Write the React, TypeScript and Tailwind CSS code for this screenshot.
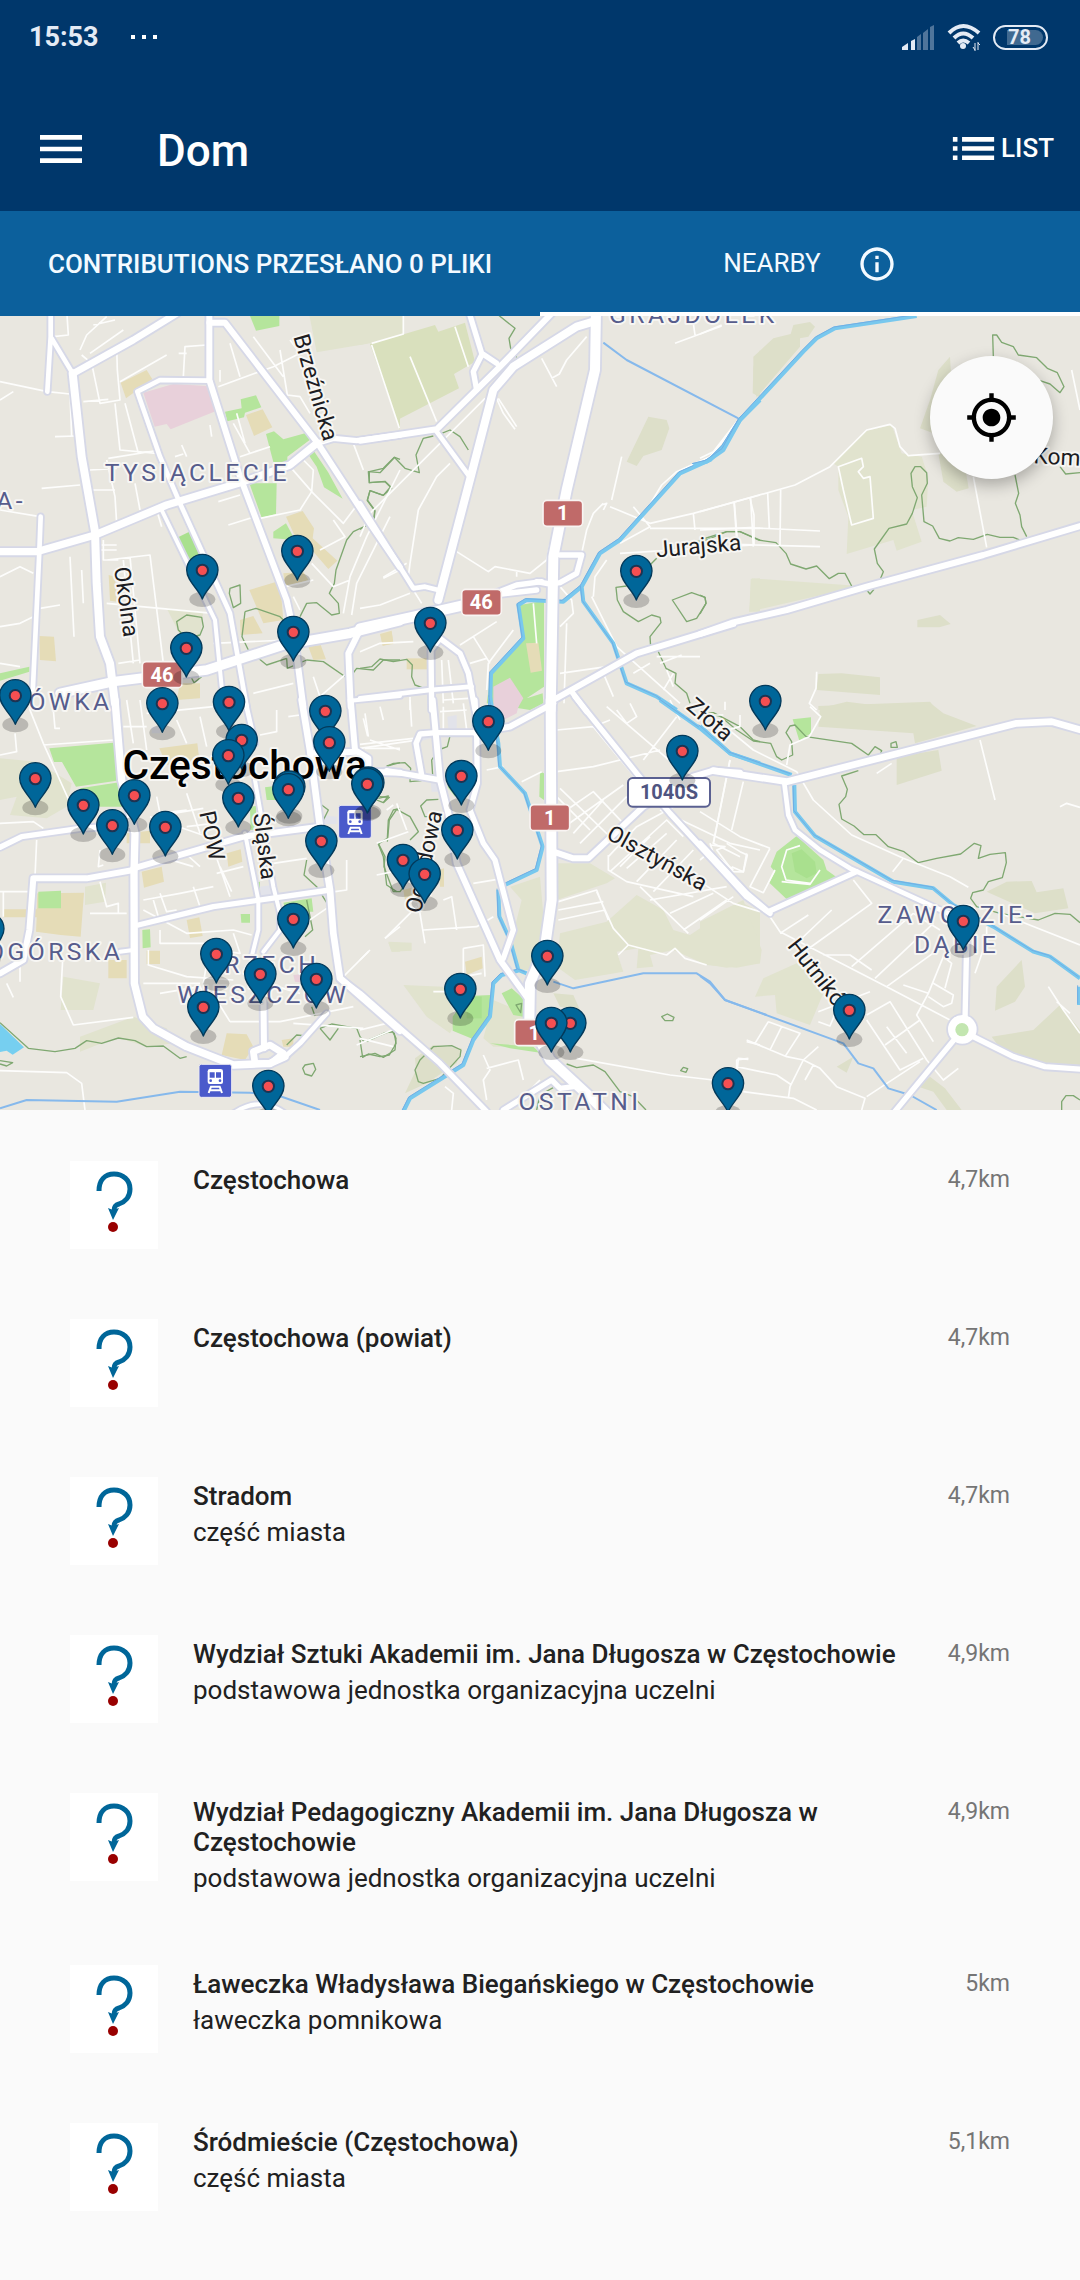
import { MdInfoOutline, MdList, MdMenu, MdMyLocation } from "react-icons/md";

type Tile = {
  x: number;
  y: number;
  areas?: [string, string][];
  minor?: string;
  trails?: string;
  river?: string;
  stream?: string;
  roads: [number, string][];
};

const PARK = "#b5e59c";
const PARK_DARK = "#a9e08e";
const SCHOOL = "#e5dcb7";
const GRASS = "#e1e3ce";
const MEADOW = "#d9e0bd";
const SCRUB = "#dddfc9";
const HOSPITAL = "#e8d0da";
const POND = "#76cff0";
const GREY = "#e2e3ea";

const tiles: Tile[] = [
  {
    x: 0,
    y: 930,
    areas: [
      [PARK, "M750,18H838V48L768,62Z"],
      [GRASS, "M925,0H1200V85L950,127Z"],
      [MEADOW, "M1110,102L1200,80V360Z"],
      [SCHOOL, "M362,218L440,180L457,208L378,265Z"],
      [HOSPITAL, "M430,248L520,222L620,228L650,302L512,358L500,342L464,350Z"],
      [PARK, "M675,305L725,295L722,268L768,256L784,292L735,308L732,322L682,334Z"],
      [SCHOOL, "M738,315L788,298L817,352L762,378Z"],
      [PARK, "M798,372L822,364L850,388L915,370L932,388L862,440L862,458L820,456Z"],
      [PARK, "M924,432L942,424L984,486L1028,566L972,532L950,470Z"],
      [PARK, "M748,520H830L828,612L785,623Z"],
      [PARK, "M820,665L858,640L885,690L820,685Z"],
      [SCHOOL, "M858,620L908,603L942,655L938,685L1012,752L985,777L940,725L890,690Z"],
      [PARK_DARK, "M534,682L568,665L600,735L572,755Z"],
      [SCHOOL, "M748,840L840,812L850,930L790,940Z"],
      [SCHOOL, "M850,790L910,785L925,810L855,830Z"],
      [SCHOOL, "M720,930L760,918L788,970L722,975Z"],
      [SCHOOL, "M326,795L345,800L350,875L330,872Z"],
      [SCHOOL, "M118,978L162,980L168,1054L120,1050Z"],
      [GRASS, "M500,895L610,905L600,985L540,975Z"],
      [PARK, "M0,1090L88,1070L88,1085L0,1112Z"],
      [SCHOOL, "M925,1010L962,1005L978,1048L940,1050Z"],
      [SCHOOL, "M1142,975L1175,965L1180,1000L1148,1008Z"],
      [SCHOOL, "M540,1120L600,1120V1165L530,1170Z"],
    ],
    minor:
      "M200,0L205,75L160,80M320,20L260,75L240,120M345,30L280,45M370,60L270,130M350,110L352,180L360,270L300,280L275,160L245,135M0,215L142,245L210,252M0,270L40,245M165,380L230,378M210,250L215,380M125,535L240,525M0,600L120,620M500,135L360,215M550,200L555,110L620,105M536,130L560,130M345,280L360,420L470,430M375,280L415,430M325,445L480,420M320,450L345,560L350,640M405,520L420,600M250,275L325,268M270,480L350,475M250,540H345M310,690V750H355M305,705H350M300,720H350M320,750L450,735L490,1060M390,740L420,1060M210,740L222,980M245,780L250,880M120,895L180,885M370,750L400,1060M320,880L640,910M640,1000L860,990M545,405L560,440M525,440L550,432M630,345L635,380M660,180V215M655,230L820,170L900,130L870,90M690,100L720,200M840,120L862,255L900,260L930,310M760,80L850,200M700,340L750,430M710,310L735,400M720,440L810,410M870,470L940,550L1030,640L1075,580M900,440L940,480L935,545L900,600L780,625M655,575L720,555M685,645L780,615M470,600L485,650M1000,630L1035,680L960,720M1200,480L1100,680L1050,800L1030,910M1170,620L1070,820L1055,915M1200,780L1150,805M855,830L940,810M880,860L900,900M0,800L60,770L100,790M0,950L60,940L100,920M0,1060L60,1070M355,1060L420,1050M940,1100L960,1160L1040,1090M760,1150L880,1120M1060,400L1090,480M935,760L1000,830L1050,810",
    trails:
      "M1200,448L1184,442L1140,488L1105,485L1108,518L1155,514L1172,530L1150,556L1110,542L1102,570L1124,600L1122,625L1103,645L1060,665L1040,690L1008,780L1003,820L988,850L1015,880L1018,910L995,915L950,878L920,880L900,920M735,905L768,895L840,920L860,940M735,905L726,980L745,1020L800,1065L860,1045M530,935L560,915L605,922L610,950L600,975L560,985L535,960ZM690,835L720,825L722,880L700,893L688,850ZM860,1045L862,1075L920,1050L970,1055L1050,1110M1055,1095L1070,1075L1120,1080L1150,1050L1200,1050M570,1095L582,1118L605,1100",
    roads: [
      [14, "M152,0V80L142,245M155,85L218,190"],
      [20, "M530,10L400,90L220,190"],
      [24, "M218,190L245,440L285,665L290,820L300,980L330,1060L345,1180"],
      [22, "M0,725H110L285,675L500,585L730,515L870,465L950,400"],
      [16, "M950,400L1000,385L1070,392L1200,375"],
      [14, "M122,620L118,725L98,1150"],
      [18, "M628,0V210L720,500L860,870L880,960L910,1190"],
      [18, "M628,38H675L950,395L1110,640L1200,772"],
      [14, "M630,212L480,210L412,245L480,440L540,580L690,910L740,1190"],
      [12, "M485,600L645,930L665,1130"],
      [28, "M180,1150L340,1115L620,1080L850,1005L1050,970L1200,932"],
      [18, "M1075,970L1045,1030L1052,1190"],
      [12, "M1050,1172L1200,1158"],
    ],
  },
  {
    x: 1080,
    y: 930,
    areas: [
      [MEADOW, "M32,102L225,45L235,65L315,38L345,155L282,192L297,235L118,327Z"],
      [GRASS, "M0,0H130V75L0,105Z"],
      [SCRUB, "M865,320L920,330L928,355L905,420L850,438L830,468L800,455Z"],
      [SCRUB, "M1200,120L1180,170L1178,250L1200,262Z"],
      [PARK, "M480,885L552,872V1130L500,1165L548,1150L550,1180L510,1200L380,1180L393,1090L490,985Z"],
      [HOSPITAL, "M400,1130L450,1103L490,1165L470,1200H400Z"],
      [SCHOOL, "M498,1000L535,998L546,1082L512,1088Z"],
      [SCHOOL, "M60,972L95,962L100,1002L68,1006Z"],
      [SCHOOL, "M140,1045H205V1078H140Z"],
      [GRASS, "M1172,808L1200,805V905L1168,905Z"],
    ],
    minor:
      "M35,105L118,355M150,140L230,335M285,50L325,170M130,0V72L35,100M545,145L590,230M680,80L620,150L598,192L575,205M405,255L430,310L465,358M415,265L470,350M375,265L30,610L0,680M270,460L230,500L175,600L150,760L145,800M290,725L385,785L405,770L510,790L560,750L570,700M470,800V780M70,802L140,760M160,840L185,880M0,895L60,885L150,850M785,440L755,570M730,580L700,610L680,660L665,730M750,590L870,640L1000,610L1200,555M730,600L740,580L725,585M1000,610L1005,660M1122,575L1130,690M1172,565L1180,710M870,655L1200,655M780,700L870,650L820,590M860,600L905,525L950,485L1050,440L1100,380L1140,330M780,730L1180,705M945,100L1085,48M1000,40L1005,75M700,860L705,800L740,750M695,860L770,1010L960,1180M600,830L635,870L640,910L600,950M620,940L612,1180M600,1090L740,1070M730,1090L760,1160M820,1090L870,1060M890,1040H1020M900,1060L965,1035M940,1090L910,1140M920,1080L940,1130M340,980L390,1060M300,1005L410,935M0,1025L60,1000L160,995M245,1050L250,1180M265,1050L280,1180M330,1060L380,1045M150,1160V1200M520,880L530,1000M460,960L385,1060L380,1140M250,1170L325,1165",
    trails:
      "M415,15L465,55L447,85L452,115L470,142M245,370L270,360L300,380L325,420M220,378L190,385L168,435L178,488L135,475L103,442L70,475L28,485V518L75,515L95,535L70,556L30,542L22,572L45,603L42,625L20,645L0,658M890,745L870,765M800,828L768,832L772,870L790,905L835,935L875,915L900,922L903,938L870,980L872,1010L895,1025L918,1075L948,1090L945,1120L980,1150L990,1180M937,870L995,848L1035,862L1038,880L1010,925L980,935ZM980,700L1040,690L1100,665H1140L1200,690M0,1075L35,1070L60,1047L100,1055L140,1048L157,1065L155,1100L165,1125L185,1132",
    river:
      "M1200,270L1140,330L1090,410L1050,450L960,490L780,690L720,730L665,830L670,875L760,1000L800,1120L890,1160L950,1200M665,830L610,875L500,870L475,885L490,985L393,1090L390,1200",
    stream: "M730,98L800,150L1135,325",
    roads: [
      [16, "M325,0L365,130L410,160M365,135L340,185L350,240"],
      [18, "M575,10L420,170L230,358L0,392"],
      [24, "M700,35L650,50L460,170L400,240L335,490L235,870"],
      [14, "M230,365L325,495M0,580L160,835L195,830L235,840"],
      [30, "M708,0L705,180L620,540L580,740L572,1200"],
      [16, "M600,735H665L650,790L600,818L570,822L530,815"],
      [30, "M0,955L160,920L380,870"],
      [16, "M380,860L470,825L545,815M400,855L530,840"],
      [16, "M215,1200L213,1020L240,985L300,1030L325,1090L345,1200"],
      [14, "M0,1165L210,1140L335,1130"],
      [18, "M580,1170L830,1030L1120,942"],
      [16, "M635,1145L680,1205"],
    ],
  },
  {
    x: 2100,
    y: 930,
    areas: [
      [SCRUB, "M160,140L220,85L272,72L280,45L330,36L345,50L325,80L300,85V110L170,262L160,230Z"],
      [GRASS, "M400,460L500,362L575,345L605,430L665,440L685,500L680,590L635,600L665,695L590,722L580,690L440,732L445,620L415,540V470Z"],
      [SCRUB, "M750,140L715,180L690,270L660,355L700,370L760,300ZM715,430L790,440L806,535L770,545L730,515Z"],
      [GRASS, "M155,805L480,828L148,905Z"],
      [SCRUB, "M652,930L720,915L752,942L718,952H652ZM355,1092L425,1090L540,1102V1155L350,1140ZM355,1188L690,1175L710,1200H355Z"],
    ],
    minor:
      "M0,72L65,45M0,605L285,525L390,470L500,360L570,343L585,355L600,410L625,437L720,430M0,445L40,425L110,335M103,578L112,690M150,565L162,615V705M203,550L208,655M242,540L240,705M0,660L150,653L360,663M100,703L360,710M415,470L485,445L490,470L475,485L490,505L510,500L520,625L455,645L430,540ZM820,500L860,712M1115,180L1140,300M350,1085L348,1135L328,1180L350,1200M75,1175V1200",
    trails:
      "M880,140L878,75H890L905,97L940,110L955,135L1010,143L1042,175L1072,188L1092,230L1080,248L1050,222L1020,212M0,690L80,665H120L175,690L228,698L258,730L272,762L318,777L350,768L388,806L415,790H435L455,828M500,840L510,852L522,838M542,805L550,785L532,760L523,717L567,655L620,642L637,610L652,563L637,530L633,490L645,470H662L680,488L682,520L665,555L672,635L698,648L718,685L750,693L775,683L820,688L862,673L900,682H940L960,690M945,495L956,550L946,580L960,615L965,650L980,680M1080,470L1097,492L1140,488M0,855L15,862L18,880L0,912",
    river: "M650,18L405,55L350,85L310,125L120,330L70,420L20,455L-20,465",
    roads: [[18, "M0,972L100,937L260,900L500,830L850,735L1140,648"]],
  },
  {
    x: 0,
    y: 2100,
    areas: [
      [PARK, "M148,145L340,128L365,240L228,260L186,186H162Z"],
      [PARK, "M240,265L368,245L380,320H300L250,300Z"],
      [GRASS, "M0,175L110,185L215,250L200,320L140,355L30,345L50,290L0,300Z"],
      [SCHOOL, "M478,145L592,130L598,180L500,195ZM425,515L485,500L492,545L432,563ZM680,460L722,448L727,485L685,500ZM380,400L450,392V430H380Z"],
      [SCHOOL, "M10,628H110L112,580L252,578L242,710L182,705L108,695L110,652H10ZM560,660L598,652L608,708L570,714ZM325,780H380V835H325ZM440,752H480V792H440Z"],
      [PARK, "M115,575L183,572V625H115ZM427,690L450,688L452,742L428,745ZM722,642H750V668H724ZM850,608L935,595L940,635H860ZM750,320L768,318V390H752ZM795,262L850,255V300H800ZM765,548L780,545V590Z"],
      [GRASS, "M255,560L318,548L315,605L255,615ZM190,830L300,850L280,930H182ZM240,1010L400,950L500,985L520,1030L440,1040L350,1012L240,1055ZM1165,728H1200V755H1175Z"],
      [SCHOOL, "M680,1000L740,1003L760,1040L735,1080L665,1065ZM845,1020L880,1015V1040H850Z"],
      [HOSPITAL, "M880,825L930,820V850L885,845Z"],
      [POND, "M0,972L72,1042L38,1064L20,1052L0,1056Z"],
      [GREY, "M780,560L815,555L825,590L785,590ZM962,345L1010,350V372H965ZM455,80H480V100H455Z"],
    ],
    minor:
      "M88,25L130,130L240,375M130,135L340,120M45,100L50,155L0,165M160,30L165,85H180M380,0L400,130M420,0L440,150M370,80H440M440,40L640,20M530,60L560,130M600,50L620,140M0,370L100,365L130,385M110,420L105,530M300,450L295,500L310,495M300,545L320,620L355,610V640M0,575H90M10,575V650M270,640H380M430,600L540,580L640,560M460,600L475,650M480,580L500,635L530,630M580,560L600,620M645,460L690,590M660,500L695,575M650,520L730,500M430,630L560,700L700,690L755,705M480,690V730H620M445,750V795L560,830L700,840M620,790L610,850M480,470L580,500M560,280L600,400M470,290L480,340L560,330M520,340L610,325M560,380L640,370M450,350L650,420M545,450L600,500M830,30V95L780,105M865,50L900,45M1090,55L1103,108M1110,120L1200,150M1095,145H1200M1040,480V570L1005,575M820,490L920,475M900,680L980,625M1155,715L1200,680M1110,750L1030,830M188,780L182,890L220,975L400,952M60,790V845M20,850L40,892M480,880L600,860L620,900M430,850H600M0,1112L200,1118L245,1150L255,1230M690,965H840L1060,920M880,970L1090,985M650,900L690,965M800,850L900,880M1070,1035L1200,980M700,700L720,760L650,750",
    trails:
      "M1200,188L1160,198M965,315L985,330L970,360M1135,295L1165,288L1150,308L1130,300M1200,325L1180,330L1165,360L1162,415L1135,432L1150,470L1160,555L1190,575M920,480L912,525L950,560L980,608M920,600L938,690L915,710M935,920L945,948M0,968L85,1045L165,1055L225,1045L260,1022L305,1030L355,1014L405,1022L440,1040L490,1038L540,1075L560,1070M960,985L995,972L1070,985L1080,1010L1092,1025L1160,998L1182,995L1188,1030L1168,1065L1140,1070L1105,1062L1088,1072L1080,1020M960,985L990,1020L1015,985M915,1095L940,1090L947,1108L935,1128L915,1122L908,1105ZM860,1035L890,1005L920,1008M0,1082L38,1088L20,1098L0,1092",
    stream: "M0,1225L80,1200L350,1205L540,1175L750,1178L830,1185L960,1230",
    roads: [
      [22, "M345,0L365,240L405,400L402,520L403,850L428,950L460,985L560,1040L700,1095L810,1090L855,1070"],
      [16, "M0,442L65,410L240,385L400,375"],
      [18, "M0,820L70,780L88,690L100,535H260L400,510"],
      [18, "M400,505L730,410L960,380"],
      [16, "M415,675L640,620L990,570"],
      [12, "M360,755L400,750"],
      [12, "M735,400L775,600V690L755,770M765,240L820,560L840,640V690L790,755"],
      [14, "M735,0L765,130"],
      [20, "M905,0L930,150L960,380L990,570L1000,700L1020,835L1200,992"],
      [18, "M1052,0L1065,150L1105,175V215L1200,218M940,160L1070,155"],
      [18, "M790,860L792,1045"],
      [14, "M980,940L900,1030L850,1075"],
      [20, "M760,1055L810,1035L850,1060L810,1092L765,1090Z"],
      [12, "M700,1240Q780,1185 855,1240"],
    ],
  },
  {
    x: 1080,
    y: 2100,
    areas: [
      [GRASS, "M575,490H690L765,535L740,550L590,600ZM740,665L830,585L910,630L940,690L990,705L1140,605L1200,635V790L1130,803L1040,795L940,750L870,765L880,800L830,805L835,745L770,755L790,815L645,840L590,800L600,700Z"],
      [GRASS, "M450,560L540,530L555,700L510,810H470L455,720L485,600ZM400,900L520,950L540,1040H400L370,1015Z"],
      [GRASS, "M130,855L250,860L290,960L270,1000L200,950ZM85,725L155,728V752L95,755Z"],
      [PARK, "M320,888L395,885L380,975L340,1018L278,992V950ZM425,880L455,865L495,900L490,950L460,945ZM540,215L552,220V300L538,290ZM390,1030L520,1040L540,1058L450,1045ZM510,10L550,0L520,25ZM262,260L285,250V290Z"],
      [PARK_DARK, "M320,890H365V955H320Z"],
      [SCRUB, "M165,1075L220,1035L305,1045L290,1090L200,1150L135,1180L168,1110ZM580,880L640,885L660,930L600,920Z"],
      [SCHOOL, "M315,785L365,770L368,805L320,825ZM130,570L165,560V600H135ZM235,510L252,505V560H240Z"],
      [HOSPITAL, "M405,0H480L470,40L430,60Z"],
      [GREY, "M262,50L290,45V85H265ZM212,245H235V275H215ZM180,105L215,115L175,125Z"],
    ],
    minor:
      "M0,145L160,122M0,133L160,115M15,40L25,110M60,20L70,60M150,0L155,80M250,20V90M310,10L320,90M240,35L320,30M590,90L700,80L750,60M770,30L800,70L830,50L810,10M740,20L950,200M850,180L950,50M700,80L840,250M930,0L960,60M590,215L700,200L900,150M600,265L760,420M600,390L790,255M620,330L700,275L790,370M660,430L800,290M640,400L730,300M590,290L690,390M745,470L830,380L960,310M750,515L920,360L970,410M745,465V510L800,545L1000,590M780,500L870,410M800,505L920,400M830,545L950,420M880,575L1000,450M900,330L1110,430L1200,450M1110,180L1060,430L1140,470M870,600L1100,560M840,560L985,700M930,640L1060,580M970,690L1100,600M1050,430L1060,460L1120,510M1160,460L1150,515L1115,500M595,605L710,570L745,660M595,630L730,605M595,660L735,630M710,575L760,685L805,735L920,765L945,745L975,775L1040,795M805,735L775,765M380,210L430,200M485,245L545,215M340,550L430,535M250,600L275,590L290,690M190,690L350,680L400,650M175,610L195,730M75,715L170,620M50,525L100,515M50,430L145,395M310,745L370,735L375,830M310,745V830L365,820M220,875H270M25,755L0,780M0,990L80,970M0,1015L100,1040M110,310L140,390M100,315L80,330M370,1065L390,1110L370,1140L380,1200M380,1105L475,1080L490,1140M540,1140L510,1170M650,1075L930,1125L1060,1140M1130,1150V1080L1165,1075M1160,1025L1200,1035M255,1160L280,1180L275,1230",
    trails:
      "M80,200L100,190L135,188L152,205L150,245L185,242M270,108L262,140L235,150L215,180L218,225M58,290L88,292L70,308M235,298L200,300L182,318L195,350H225M82,425L88,360L110,328L150,350L175,395L150,420M55,430L75,470L72,500L100,575H120L135,555M165,1110L180,1080L220,1040L275,1037L303,1050L300,1070L240,1135L190,1150L175,1145ZM0,1070L45,1060L70,1072L105,1050L108,1015L98,995L75,998L20,1025M468,915L485,910L482,938ZM905,950L922,942L942,952L938,962H915ZM962,1112L970,1102L983,1106L978,1117ZM620,1092L650,1103L700,1095L735,1115L780,1175L820,1190L858,1230M585,1160L540,1185L530,1230M1020,40L1060,38L1140,80L1180,120L1200,125",
    river:
      "M390,-10L415,130L420,200L495,280L548,440L530,510L435,555M415,570L418,650L450,720L475,810L500,820M475,812L425,825L400,850L390,950L340,1020L310,1095L150,1195L130,1235M900,0L1020,85L1110,160L1200,190",
    stream: "M580,845L640,865L850,820H1010L1050,845L1095,900L1220,945",
    roads: [
      [18, "M218,0L240,240L265,340L290,490L420,780L500,890"],
      [16, "M345,0L350,100L352,250L330,330L370,430L405,480L460,690L430,775"],
      [16, "M350,98H230L180,102L168,130L185,225M80,212L240,240"],
      [18, "M345,98L450,80L580,10"],
      [30, "M572,0L575,600L555,740L510,850L508,960L570,1080L700,1200L740,1240"],
      [18, "M580,455L640,475H685L850,320L1000,230L1060,212L1140,218"],
      [16, "M645,-10L830,220L930,340L1160,590L1230,640"],
      [16, "M-60,835L0,880L240,1090L380,1235"],
      [16, "M430,1230L575,1140L600,1165L640,1160"],
    ],
  },
  {
    x: 2100,
    y: 2100,
    areas: [
      [PARK, "M278,58L333,52V100L298,122Z"],
      [SCRUB, "M360,25L440,5L560,20L690,8L730,40L830,78L645,130L640,100L355,80ZM590,170L715,150L725,212L590,255Z"],
      [PARK, "M212,500L230,455L290,408L370,480L380,510L408,530L265,602L208,548L225,515Z"],
      [PARK_DARK, "M275,460L305,448L345,485L350,520L320,535L285,515Z"],
      [SCRUB, "M860,575L920,545L995,543L1010,577L1090,565L1105,625L1005,640ZM890,860L965,780L975,860L945,905L885,932ZM875,1010L1000,990L1080,915L1140,990V1095L1040,1090L900,1045ZM410,1100L460,1070L440,1118ZM655,1160L690,1130L735,1165L785,1230H740L700,1175Z"],
      [GRASS, "M0,665L130,600L185,750L180,790L80,803L0,790ZM165,890L190,835L300,785L370,880L330,975L230,940L225,885Z"],
    ],
    minor:
      "M330,20L362,50L328,110L270,135L260,195M0,80L75,92L120,80V45M0,45H70M75,80L160,150L290,215L340,300L455,405L610,475L750,530L805,562M610,475L578,515M840,120L885,300M530,220L575,190M1080,320L1100,310L1140,322M90,180L40,430M130,245L95,390M0,335L120,410L210,445M210,445L150,560L190,578L225,510M245,545L330,553L360,510M300,437L260,450L245,500L258,540L330,550M30,435L75,440L50,450L100,515L130,516L142,465L120,455L80,430M0,480L35,450M0,545L100,610L180,635M0,660L100,590M210,650L240,695L560,860L750,960M240,700L325,645M300,720L395,630M320,750L515,610L460,540M370,765L450,765L515,810M455,800L640,640M525,835L700,670M560,860L740,730M640,640L720,690M355,935L510,875M355,965L390,978L410,930M500,945L570,905L680,1080L730,1140L775,1105M500,960L600,1110L670,1075M555,1035L660,960M560,980L620,1060M610,855L685,880L650,945L700,1025M685,880L730,770L755,790L735,865M700,850L760,885L755,910L730,920L685,890M1045,860L1090,930L1140,1000M1070,905L1110,940M900,640L1140,735M860,680V720L825,820M140,1020L260,1070L310,1080L360,1105L410,1160L495,1195L485,1230M205,965L165,1030M205,965L300,1000L255,1070M245,980L210,1050M355,1040L310,1080L270,1160L265,1195M110,1100L230,1125L275,1155M130,1175L280,1195L350,1230M340,1095L315,1140M500,1190L660,1085M110,1130L115,1075L145,1078",
    trails:
      "M0,38L60,48L110,90L160,123L212,130L230,170L245,180L278,165L275,125L258,98L270,78L285,75L318,110L455,130L505,165L525,140L545,152L540,165M573,130L588,125L592,142H573ZM475,212L425,228L442,268L437,290L417,313L425,357L462,378L492,404H528L565,440L612,455L655,488L710,475L782,462L823,430L843,437L835,475L870,463L916,458L919,488L907,533L865,545L850,570L818,578L812,595L830,620L900,640L1015,660L1065,640L1110,643L1140,668M1085,1230V1205L1098,1187H1120L1140,1200",
    river:
      "M0,78L90,160L275,225M283,255L285,335L345,408L580,545L700,565L760,615L880,680L1000,755L1050,770L1140,835M1137,860V915",
    stream: "M0,828L30,850L75,900L430,1030L475,1090L520,1105L565,1165L630,1185L710,1230",
    roads: [
      [14, "M253,250L265,345L285,390L360,450L450,505L700,620L790,660"],
      [20, "M40,212L260,245L950,70L1055,65L1150,92"],
      [16, "M0,430L140,580L205,635L470,515"],
      [16, "M800,730L795,960"],
      [16, "M770,1010L580,1240M810,1005L940,1070L1035,1100L1150,1108"],
      [26, "M757,988a30,30 0 1,0 60,0a30,30 0 1,0 -60,0"],
    ],
  },
];

const districts: [number, number, string, "start" | "middle" | "end"][] = [
  [592, 1443, "TYSIĄCLECIE", "middle"],
  [78, 1528, "A-", "end"],
  [338, 2130, "IÓWKA", "end"],
  [370, 2880, "OGÓRSKA", "end"],
  [788, 2918, "TRZECH", "middle"],
  [790, 3010, "WIESZCZÓW", "middle"],
  [2870, 2768, "ZAWODZIE-", "middle"],
  [2870, 2858, "DĄBIE", "middle"],
  [1740, 3330, "OSTATNI", "middle"],
  [2080, 968, "GRAJDOLEK", "middle"],
];

const streets: [number, number, number, string][] = [
  [880, 1010, 74, "Brzeźnicka"],
  [342, 1704, 82, "Okólna"],
  [598, 2438, 78, "POW"],
  [760, 2442, 83, "Śląska"],
  [1970, 1672, -5, "Jurajska"],
  [2056, 2124, 41, "Złota"],
  [1816, 2514, 29, "Olsztyńska"],
  [2360, 2838, 52, "Hutników"],
  [1262, 2742, -78, "Ogrodowa"],
  [3100, 1390, 3, "Komorowa"],
];

const shields: [number, number, string][] = [
  [427, 1985, "46"],
  [1385, 1768, "46"],
  [1629, 1501, "1"],
  [1590, 2414, "1"],
  [1544, 3059, "1"],
];

const pins: [number, number][] = [
  [892, 1654], [607, 1711], [1909, 1714], [1291, 1870], [880, 1897], [559, 1945],
  [46, 2087], [2296, 2104], [687, 2107], [487, 2111], [976, 2134], [1465, 2165],
  [725, 2221], [988, 2228], [2047, 2254], [685, 2267], [1384, 2329], [106, 2336],
  [1105, 2349], [1102, 2353], [868, 2361], [865, 2369], [403, 2387], [715, 2395],
  [250, 2416], [337, 2477], [496, 2482], [1372, 2491], [964, 2524], [1209, 2581],
  [1274, 2623], [880, 2758], [2890, 2764], [-35, 2787], [649, 2863], [1642, 2869],
  [781, 2923], [949, 2938], [1381, 2968], [610, 3022], [2548, 3031], [1711, 3070],
  [1654, 3070], [2184, 3251], [805, 3259],
];

const stations: [number, number][] = [
  [1016, 2416],
  [597, 3193],
];

function at(t: Tile) {
  return `translate(${t.x} ${t.y})`;
}

function CityMap() {
  return (
    <svg viewBox="0 948 3240 2382" className="block h-auto w-full bg-[#e9e7e0]" role="img" aria-label="Mapa okolicy">
      {tiles.map((t, i) => (
        <g key={i} transform={at(t)}>
          {t.areas?.map(([fill, d], j) => <path key={j} d={d} fill={fill} />)}
        </g>
      ))}
      <g fill="none" strokeLinejoin="round">
        {tiles.map((t, i) => <path key={i} transform={at(t)} d={t.trails} stroke="#7fa871" strokeWidth="4" />)}
        {tiles.map((t, i) => <path key={i} transform={at(t)} d={t.minor} stroke="#fdfdfc" strokeWidth="5" />)}
        {tiles.map((t, i) => (
          <g key={i} transform={at(t)}>
            <path d={t.river} stroke="#78c8ee" strokeWidth="12" />
            <path d={t.river} stroke="#71aee4" strokeWidth="3" transform="translate(-4 -4)" />
            <path d={t.stream} stroke="#86b9ec" strokeWidth="6" />
          </g>
        ))}
      </g>
      <g fill="none" strokeLinejoin="round" strokeLinecap="round" stroke="#d6d8e7">
        {tiles.map((t, i) => (
          <g key={i} transform={at(t)}>
            {t.roads.map(([w, d], j) => <path key={j} d={d} strokeWidth={w + 11} />)}
          </g>
        ))}
      </g>
      <g fill="none" strokeLinejoin="round" strokeLinecap="round" stroke="#ffffff">
        {tiles.map((t, i) => (
          <g key={i} transform={at(t)}>
            {t.roads.map(([w, d], j) => <path key={j} d={d} strokeWidth={w} />)}
          </g>
        ))}
      </g>
      <circle cx="2886" cy="3089" r="20" fill="#c3e6b0" />

      <g stroke="#f7f6f3" strokeWidth="12" strokeLinejoin="round" className="[paint-order:stroke]">
        {districts.map(([x, y, s, anchor]) => (
          <text key={s} x={x} y={y} textAnchor={anchor} fill="#565c8c" className="text-[74px] tracking-[0.14em]">
            {s}
          </text>
        ))}
        {streets.map(([x, y, a, s]) => (
          <text key={s} transform={`translate(${x} ${y}) rotate(${a})`} fill="#1c1c22" className="text-[68px]">
            {s}
          </text>
        ))}
        <text x="734" y="2336" textAnchor="middle" fill="#000000" className="text-[122px] font-medium">
          Częstochowa
        </text>
      </g>

      {shields.map(([x, y, s], i) => (
        <g key={i}>
          <rect x={x} y={y} width="119" height="78" rx="12" fill="#c06a69" stroke="#f8f4f2" strokeWidth="5" />
          <text x={x + 59} y={y + 60} textAnchor="middle" fill="#ffffff" className="text-[60px] font-bold">
            {s}
          </text>
        </g>
      ))}
      <rect x="1884" y="2334" width="246" height="86" rx="14" fill="#ffffff" stroke="#5a6091" strokeWidth="6" />
      <text x="2007" y="2396" textAnchor="middle" fill="#4f5581" className="text-[60px] font-bold">
        1040S
      </text>

      {stations.map(([x, y], i) => (
        <g key={i} transform={`translate(${x} ${y})`}>
          <rect width="98" height="99" rx="7" fill="#4a5acb" stroke="#ecebf2" strokeWidth="3" />
          <path d="M33,14H65Q72,14 72,21V53Q72,59 66,59H32Q26,59 26,53V21Q26,14 33,14Z" fill="#ffffff" />
          <path d="M32,24H47V40H32ZM51,24H66V40H51Z" fill="#4a5acb" />
          <circle cx="35" cy="49" r="4" fill="#4a5acb" />
          <circle cx="63" cy="49" r="4" fill="#4a5acb" />
          <path d="M36,67L29,86M62,67L69,86M34,67H64M32,78H66" stroke="#ffffff" strokeWidth="6" fill="none" />
        </g>
      ))}

      {pins.map(([x, y], i) => (
        <g key={i} transform={`translate(${x} ${y})`}>
          <ellipse cy="87" rx="39" ry="23" fill="#000000" opacity="0.2" />
          <path
            d="M0,86C-10,57 -47,32 -47,-1A47,47 0 0,1 47,-1C47,32 10,57 0,86Z"
            fill="#006699"
            stroke="#033a5b"
            strokeWidth="4"
            strokeLinejoin="round"
          />
          <circle r="17" fill="#f54f52" stroke="#1b3453" strokeWidth="6" />
        </g>
      ))}
    </svg>
  );
}

function PlaceIcon() {
  return (
    <svg viewBox="0 0 88 88" className="size-[88px] shrink-0 bg-white" aria-hidden="true">
      <path
        d="M29,30C29,19 35,13 44,13C53,13 60,19 60,28C60,36 55,41 49,43C45,44 44,46 44,50"
        fill="none"
        stroke="#006699"
        strokeWidth="5"
      />
      <path d="M38,47L43,49L49,47L43,59Z" fill="#006699" />
      <circle cx="43" cy="66" r="5" fill="#990000" />
    </svg>
  );
}

function StatusIcons() {
  return (
    <div className="flex items-center gap-3 text-[#e4ebf5]">
      <svg viewBox="0 0 33 25" className="h-[25px] w-[33px]" fill="currentColor" aria-hidden="true">
        <path d="M0,25V22L6,18V25ZM9,25V16L13,14V25Z" />
        <path d="M15,25V12L19,9V25ZM21,25V8L26,4V25ZM28,25V2L32,0V25Z" opacity="0.35" />
      </svg>
      <svg viewBox="0 0 34 28" className="h-[28px] w-[34px]" fill="none" stroke="currentColor" strokeWidth="4" aria-hidden="true">
        <path d="M2,10Q16,-4 32,10M7,15Q16,6 26,15M11,20Q16,15 22,20" />
        <circle cx="16" cy="23" r="3" fill="currentColor" stroke="none" />
        <path d="M28,20V28M31,19V27M26,24L28,27M33,22L31,20" strokeWidth="1" />
      </svg>
      <div className="flex h-[25px] w-[55px] rounded-full border-2 border-current p-[3px] pl-3">
        <div className="flex flex-1 items-center rounded-r-full bg-white/25 pl-px text-xl font-bold">78</div>
      </div>
    </div>
  );
}

const places = [
  { name: "Częstochowa", distance: "4,7km" },
  { name: "Częstochowa (powiat)", distance: "4,7km" },
  { name: "Stradom", kind: "część miasta", distance: "4,7km" },
  { name: "Wydział Sztuki Akademii im. Jana Długosza w Częstochowie", kind: "podstawowa jednostka organizacyjna uczelni", distance: "4,9km" },
  { name: "Wydział Pedagogiczny Akademii im. Jana Długosza w Częstochowie", kind: "podstawowa jednostka organizacyjna uczelni", distance: "4,9km" },
  { name: "Ławeczka Władysława Biegańskiego w Częstochowie", kind: "ławeczka pomnikowa", distance: "5km" },
  { name: "Śródmieście (Częstochowa)", kind: "część miasta", distance: "5,1km" },
];

export default function App() {
  return (
    <div className="min-h-screen bg-[#fafafa] font-[Roboto,sans-serif] text-[#212121]">
      <header className="bg-[#00376b] text-white">
        <div className="flex h-[74px] items-center justify-between pr-8 pl-[29px]">
          <div className="flex items-center gap-8 text-[#e4ebf5]">
            <span className="text-[27px] font-bold">15:53</span>
            <span className="flex gap-[7px]" aria-hidden="true">
              <i className="size-1 bg-white" />
              <i className="size-1 bg-white" />
              <i className="size-1 bg-white" />
            </span>
          </div>
          <StatusIcons />
        </div>
        <div className="flex h-[137px] items-center pt-3 pr-[26px] pl-[33px]">
          <button type="button" aria-label="Menu" className="mr-[68px]">
            <MdMenu className="size-14" />
          </button>
          <h1 className="flex-1 pt-1 text-[44px] font-medium">Dom</h1>
          <button type="button" className="flex items-center text-[26px] font-medium">
            <MdList className="size-[55px]" />
            LIST
          </button>
        </div>
      </header>
      <nav className="flex h-[105px] bg-[#0c609c] text-[26px] text-[#f4faff]">
        <button type="button" className="w-1/2 pt-0.5 font-medium">
          CONTRIBUTIONS PRZESŁANO 0 PLIKI
        </button>
        <div className="flex w-1/2 items-center justify-center gap-9 border-b-4 border-white pt-1">
          <button type="button" aria-current="page">NEARBY</button>
          <button type="button" aria-label="Informacje">
            <MdInfoOutline className="size-10" />
          </button>
        </div>
      </nav>
      <main>
        <section className="relative overflow-hidden">
          <CityMap />
          <button
            type="button"
            aria-label="Moja lokalizacja"
            className="absolute top-10 right-[27px] flex size-[123px] items-center justify-center rounded-full bg-[#fafafa] text-black shadow-[0_6px_16px_rgba(0,0,0,0.28)]"
          >
            <MdMyLocation className="size-[53px]" />
          </button>
        </section>
        <ul className="text-[26px] leading-[30px]">
          {places.map((p) => (
            <li key={p.name} className="flex items-start px-[70px] pt-[51px] pb-[19px]">
              <PlaceIcon />
              <div className="ml-[35px] flex flex-1 flex-col gap-1.5 pt-1 pb-0.5">
                <h2 className="font-medium">{p.name}</h2>
                {p.kind && <p>{p.kind}</p>}
              </div>
              <span className="ml-7 pt-1 text-[23px] text-[#757575]">{p.distance}</span>
            </li>
          ))}
        </ul>
      </main>
    </div>
  );
}
